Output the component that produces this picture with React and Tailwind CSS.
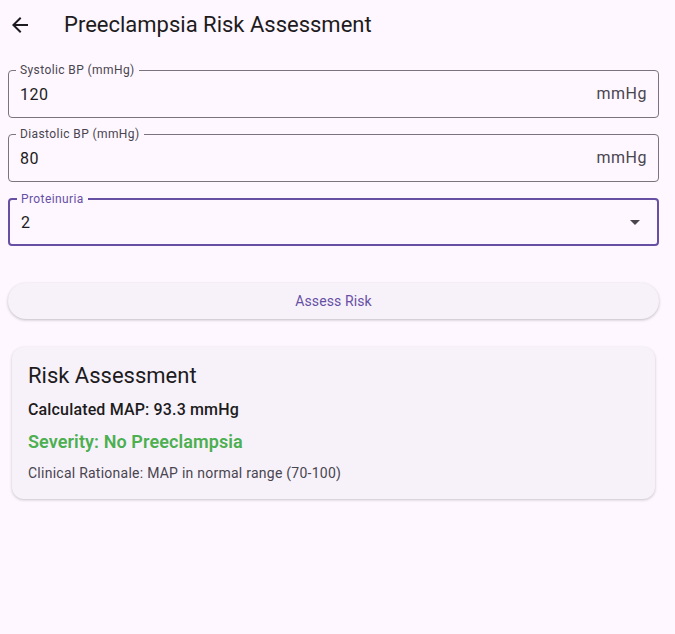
import React, { useState } from 'react';

const Field = ({ label, value, suffix, focused, dropdown }) => {
    const border = focused ? 'border-2 border-[#6750a4]' : 'border border-[#79747e]';
    return (
        <div className={`relative h-[48px] rounded-[4px] ${border} flex items-center pl-[11px] pr-[11px]`}>
            <span
                className={`absolute left-[7px] -top-[9px] px-[4px] bg-[#fef7ff] text-[12px] leading-[16px] tracking-[0.4px] ${focused ? 'text-[#6750a4]' : 'text-[#49454f]'}`}
            >
                {label}
            </span>
            <span className="flex-1 text-[16px] tracking-[0.5px] text-[#1d1b20] pt-[2px]">{value}</span>
            {suffix && <span className="text-[16px] tracking-[0.5px] text-[#49454f]">{suffix}</span>}
            {dropdown && (
                <svg width="24" height="24" viewBox="0 0 24 24" className="-mr-[1px]">
                    <path d="M7 10l5 5 5-5z" fill="#49454f" />
                </svg>
            )}
        </div>
    );
};

const App = () => {
    const [systolic] = useState('120');
    const [diastolic] = useState('80');
    const map = ((Number(systolic) + 2 * Number(diastolic)) / 3).toFixed(1);

    return (
        <div className="min-h-[634px] bg-[#fef7ff] font-['Roboto',sans-serif]">
            {/* App bar */}
            <div className="h-[50px] flex items-center">
                <button className="w-[40px] h-[40px] flex items-center justify-center">
                    <svg width="24" height="24" viewBox="0 0 24 24">
                        <path d="M20 11H7.83l5.59-5.59L12 4l-8 8 8 8 1.41-1.41L7.83 13H20v-2z" fill="#1d1b20" />
                    </svg>
                </button>
                <h1 className="ml-[24px] text-[22px] text-[#1d1b20] leading-[28px]">Preeclampsia Risk Assessment</h1>
            </div>

            <div className="pl-[8px] pr-[16px] pt-[20px] flex flex-col">
                <div className="flex flex-col gap-[16px]">
                    <Field label="Systolic BP (mmHg)" value={systolic} suffix="mmHg" />
                    <Field label="Diastolic BP (mmHg)" value={diastolic} suffix="mmHg" />
                    <Field label="Proteinuria" value="2" focused dropdown />
                </div>

                <button className="mt-[37px] h-[36px] rounded-full bg-[#f7f2fa] text-[#6750a4] text-[14px] tracking-[0.1px] shadow-[0_1px_3px_rgba(0,0,0,0.25)]">
                    Assess Risk
                </button>

                <div className="mt-[28px] mx-[4px] rounded-[12px] bg-[#f7f2fa] shadow-[0_1px_3px_rgba(0,0,0,0.22)] px-[16px] pt-[15px] pb-[16px]">
                    <h2 className="text-[22px] leading-[28px] text-[#1d1b20]">Risk Assessment</h2>
                    <p className="mt-[9px] text-[16px] font-medium leading-[22px] tracking-[0.15px] text-[#1d1b20]">Calculated MAP: {map} mmHg</p>
                    <p className="mt-[10px] text-[18px] font-semibold leading-[22px] tracking-[0.1px] text-[#4caf50]">Severity: No Preeclampsia</p>
                    <p className="mt-[10px] text-[14px] leading-[20px] tracking-[0.25px] text-[#49454f]">Clinical Rationale: MAP in normal range (70-100)</p>
                </div>
            </div>
        </div>
    );
};

export default App;
